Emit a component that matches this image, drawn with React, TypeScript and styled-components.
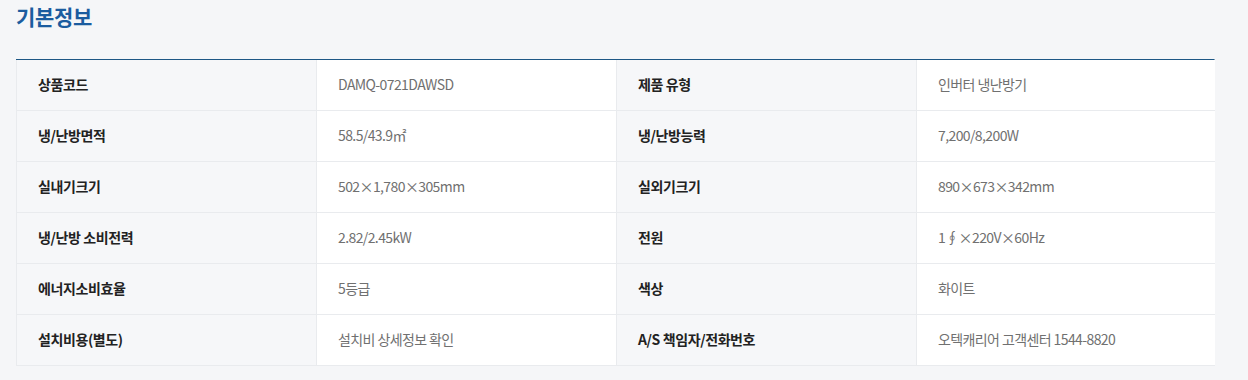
import React from "react";
import styled, { createGlobalStyle } from "styled-components";

const GlobalStyle = createGlobalStyle`
  html, body {
    margin: 0;
    padding: 0;
    background: #f5f6f8;
    font-family: "Noto Sans CJK KR", "Noto Sans", sans-serif;
  }
`;

interface Spec {
  label: string;
  value: string;
}

const specs: Spec[][] = [
  [
    { label: "상품코드", value: "DAMQ-0721DAWSD" },
    { label: "제품 유형", value: "인버터 냉난방기" },
  ],
  [
    { label: "냉/난방면적", value: "58.5/43.9㎡" },
    { label: "냉/난방능력", value: "7,200/8,200W" },
  ],
  [
    { label: "실내기크기", value: "502×1,780×305mm" },
    { label: "실외기크기", value: "890×673×342mm" },
  ],
  [
    { label: "냉/난방 소비전력", value: "2.82/2.45kW" },
    { label: "전원", value: "1∮×220V×60Hz" },
  ],
  [
    { label: "에너지소비효율", value: "5등급" },
    { label: "색상", value: "화이트" },
  ],
  [
    { label: "설치비용(별도)", value: "설치비 상세정보 확인" },
    { label: "A/S 책임자/전화번호", value: "오텍캐리어 고객센터 1544-8820" },
  ],
];

const Section = styled.section`
  padding: 2px 0 0 16px;
`;

const Title = styled.h2`
  margin: 0;
  font-size: 21px;
  line-height: 28px;
  font-weight: 700;
  color: #1b5c9f;
  letter-spacing: -0.3px;
`;

const Table = styled.div`
  margin-top: 29px;
  width: 1199px;
  display: grid;
  grid-template-columns: 300px 300px 300px 299px;
  border-top: 1px solid #1d5785;
  border-right: 1px solid #e6e8ec;
  box-sizing: border-box;
`;

const Cell = styled.div<{ $head?: boolean }>`
  height: 51px;
  box-sizing: border-box;
  display: flex;
  align-items: center;
  padding: 0 21px 3px;
  border-bottom: 1px solid #e9ebee;
  border-left: 1px solid #e9ebee;
  font-size: 14px;
  letter-spacing: ${(p) => (p.$head ? "-0.4px" : "-0.6px")};
  background: ${(p) => (p.$head ? "#f6f7f9" : "#ffffff")};
  color: ${(p) => (p.$head ? "#222222" : "#707070")};
  font-weight: ${(p) => (p.$head ? 700 : 400)};
`;

export default function App() {
  return (
    <>
      <GlobalStyle />
      <Section>
        <Title>기본정보</Title>
        <Table>
          {specs.map((row, i) => (
            <React.Fragment key={i}>
              {row.map((s) => (
                <React.Fragment key={s.label}>
                  <Cell $head>{s.label}</Cell>
                  <Cell>{s.value}</Cell>
                </React.Fragment>
              ))}
            </React.Fragment>
          ))}
        </Table>
      </Section>
    </>
  );
}
